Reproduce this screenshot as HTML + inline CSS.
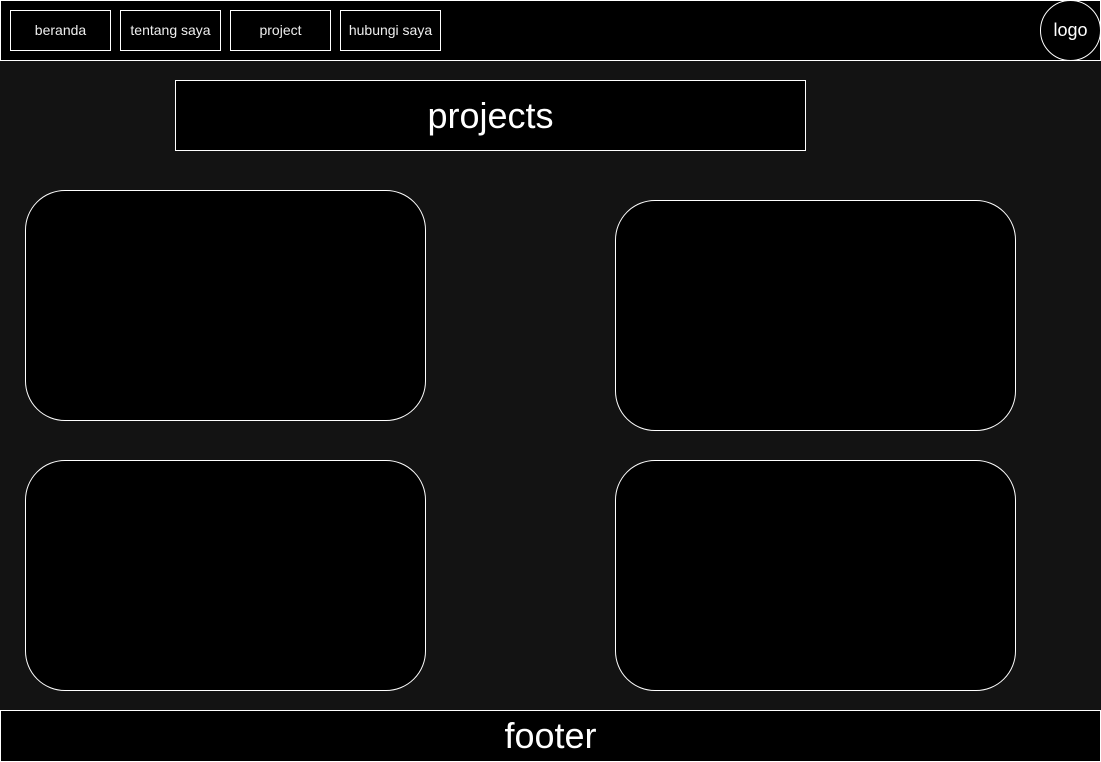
<!DOCTYPE html>
<html><head><meta charset="utf-8"><style>
*{margin:0;padding:0;box-sizing:border-box}
html,body{width:1101px;height:761px;overflow:hidden;background:#131313;font-family:"Liberation Sans",Arial,sans-serif;color:#fff}
.a{position:absolute;border:1px solid #fff;background:#000}
.btn{top:10px;width:101px;height:41px;font-size:14px;display:flex;align-items:center;justify-content:center;color:#eee;padding-bottom:2px}
.card{width:401px;height:231px;border-radius:40px}
</style></head><body>
<div class="a" style="left:0;top:0;width:1101px;height:61px"></div>
<div class="a btn" style="left:10px">beranda</div>
<div class="a btn" style="left:120px">tentang saya</div>
<div class="a btn" style="left:230px">project</div>
<div class="a btn" style="left:340px">hubungi saya</div>
<div class="a" style="left:1040px;top:0;width:61px;height:61px;border-radius:50%;display:flex;align-items:center;justify-content:center;font-size:18px">logo</div>
<div class="a" style="left:175px;top:80px;width:631px;height:71px;display:flex;align-items:center;justify-content:center;font-size:36px">projects</div>
<div class="a card" style="left:25px;top:190px"></div>
<div class="a card" style="left:615px;top:200px"></div>
<div class="a card" style="left:25px;top:460px"></div>
<div class="a card" style="left:615px;top:460px"></div>
<div class="a" style="left:0;top:710px;width:1101px;height:52px;display:flex;align-items:center;justify-content:center;font-size:36px">footer</div>
</body></html>
